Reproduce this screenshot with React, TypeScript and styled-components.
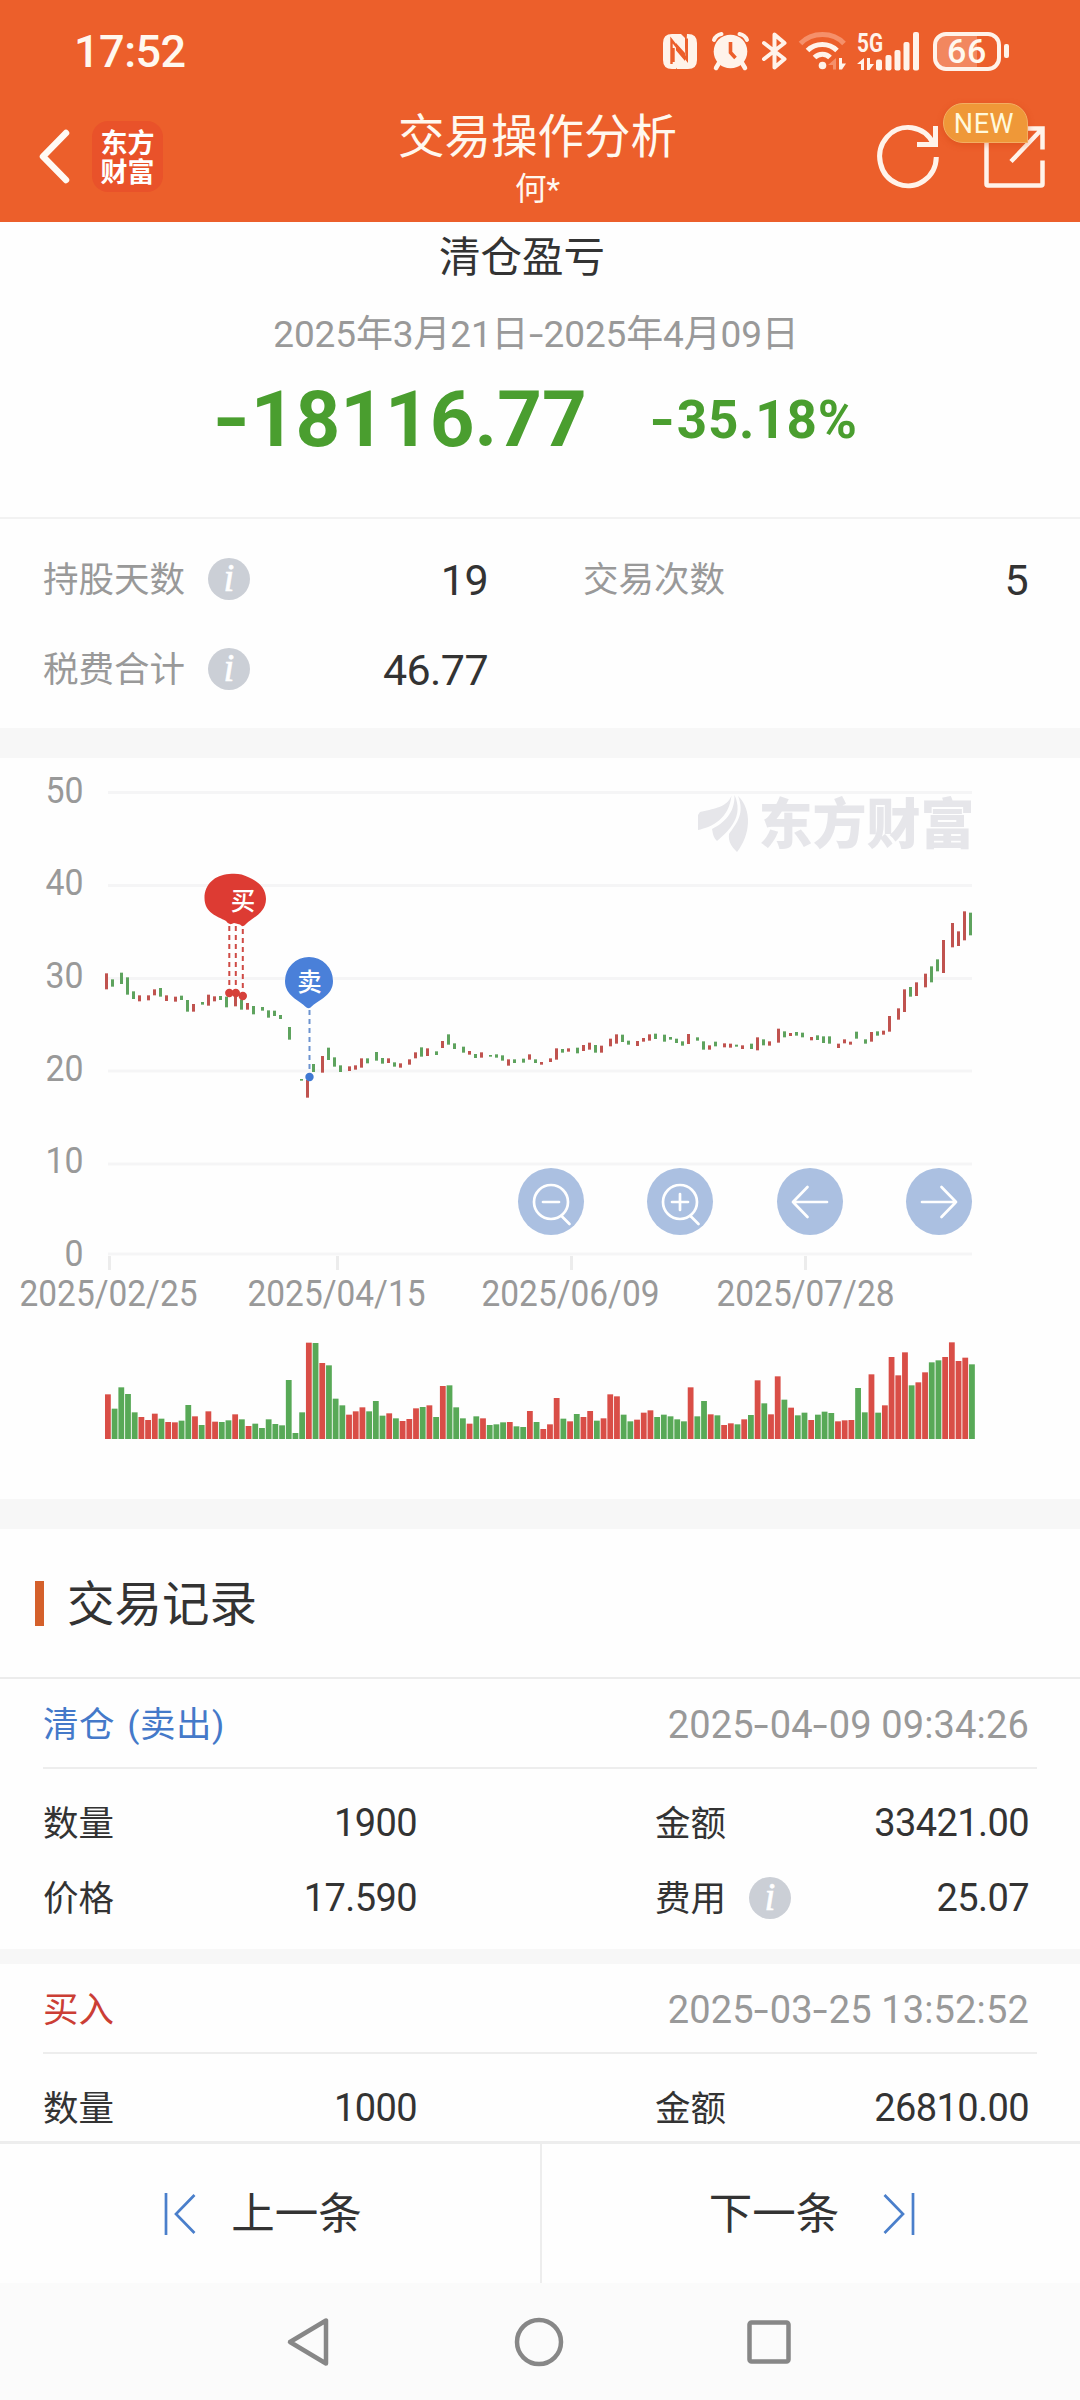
import React from "react";
import styled, { createGlobalStyle } from "styled-components";

const FONT = `Roboto, "Noto Sans CJK SC", sans-serif`;

const GlobalStyle = createGlobalStyle`
  * { box-sizing: border-box; }
  html, body { margin: 0; padding: 0; background: #fff; }
  body { font-family: ${FONT}; color: #333; }
  svg { display: block; flex: none; overflow: visible; }
`;

/* ---------- layout ---------- */

const Screen = styled.div`
  width: 1080px;
  height: 2400px;
  overflow: hidden;
  display: flex;
  flex-direction: column;
  background: #fefefe;
`;

const Header = styled.header`
  flex: none;
  height: 222px;
  background: #ec5f2b;
  color: #fff8ef;
`;

const StatusBar = styled.div`
  height: 102px;
  padding: 0 70px 0 74px;
  display: flex;
  align-items: center;
`;

const Clock = styled.span`
  flex: 1;
  font-size: 45px;
  font-weight: 500;
  line-height: 52px;
  letter-spacing: -0.5px;
  padding-top: 2px;
`;

const StatusSlot = styled.span<{ $gap: number }>`
  margin-left: ${(p) => p.$gap}px;
`;

const Battery = styled.span`
  position: relative;
  display: flex;
  align-items: center;
  justify-content: center;
  width: 68px;
  height: 39px;
  margin: 0 9px 0 14px;
  border: 4px solid #fff3ea;
  border-radius: 13px;
  background: linear-gradient(90deg, #f2875f 66%, #ec5f2b 66%);
  font-size: 34px;
  font-weight: 500;
  line-height: 31px;
  letter-spacing: 0.6px;

  &::after {
    content: "";
    position: absolute;
    right: -12px;
    top: 8px;
    width: 5px;
    height: 14px;
    border-radius: 2px;
    background: #fff3ea;
  }
`;

const NavBar = styled.div`
  height: 120px;
  padding: 0 35px 0 36px;
  display: grid;
  grid-template-columns: 1fr auto 1fr;
`;

const NavLeft = styled.div`
  display: flex;
  align-items: center;
  gap: 22px;
  height: 108px;
`;

const Logo = styled.div`
  width: 71px;
  height: 71px;
  padding: 6px 8px;
  border-radius: 16px;
  background: #e9522a;
  font-family: "Noto Sans CJK SC", sans-serif;
  font-weight: 700;
  font-size: 27px;
  line-height: 29px;
  text-align: center;
  word-break: break-all;
  color: #fff;
`;

const Titles = styled.div`
  text-align: center;
  padding: 2px 6px 0 0;
`;

const Title = styled.h1`
  margin: 0;
  font-size: 46.5px;
  font-weight: 400;
  line-height: 66px;
`;

const Subtitle = styled.div`
  font-size: 31.5px;
  line-height: 40px;
`;

const NavRight = styled.div`
  position: relative;
  justify-self: end;
  height: 108px;
  display: flex;
  align-items: center;
  gap: 45px;
`;

const NewBadge = styled.span`
  position: absolute;
  left: 66px;
  top: 1px;
  width: 85px;
  height: 40px;
  border: 1.5px solid #f3ae62;
  border-radius: 20px 20px 0 20px;
  background: #ef9838;
  box-shadow: 0 2px 6px rgba(200, 60, 10, 0.35);
  font-size: 27px;
  line-height: 40px;
  letter-spacing: 0.6px;
  text-align: center;
  color: #fff9dc;
  padding-right: 3px;
`;

const Summary = styled.section`
  flex: none;
  height: 295px;
  padding-right: 8px;
  display: flex;
  flex-direction: column;
  align-items: center;
`;

const SummaryTitle = styled.h2`
  margin: 5px 28px 0 0;
  font-size: 41.5px;
  font-weight: 400;
  line-height: 62px;
`;

const Period = styled.div`
  margin-top: 20px;
  font-size: 37px;
  line-height: 52px;
  letter-spacing: -0.15px;
  color: #999;
`;

const Result = styled.div`
  margin: 12px 2px 0 0;
  height: 92px;
  display: flex;
  align-items: center;
  gap: 63px;
  font-weight: 700;
  color: #4a9e2f;
`;

const Amount = styled.span`
  font-size: 78px;
  line-height: 92px;
  padding-top: 2px;
`;

const Percent = styled.span`
  font-size: 53px;
  line-height: 92px;
  letter-spacing: 0.8px;
  padding-top: 2px;
`;

const Dash = styled.span<{ $bold?: boolean }>`
  display: inline-block;
  transform: scaleX(${(p) => (p.$bold ? 1.25 : 1.4)});
  margin: 0 ${(p) => (p.$bold ? "0.05em" : "0.07em")};
`;

const Stats = styled.section`
  flex: none;
  height: 211px;
  border-top: 2px solid #f2f2f2;
  padding: 15px 52px 0 44px;
  display: grid;
  grid-template-columns: 444px 444px;
  column-gap: 96px;
  grid-auto-rows: 90px;
`;

const Pair = styled.div`
  display: flex;
  align-items: center;
`;

const Label = styled.span<{ $muted?: boolean }>`
  font-size: 35.5px;
  line-height: 52px;
  padding-top: 2px;
  margin-left: -1px;
  color: ${(p) => (p.$muted ? "#999" : "#333")};
`;

const Value = styled.span<{ $large?: boolean }>`
  margin-left: auto;
  font-size: ${(p) => (p.$large ? 43 : 38)}px;
  line-height: 52px;
  letter-spacing: ${(p) => (p.$large ? -0.6 : -0.6)}px;
  padding-top: 1px;
`;

const Info = styled.span`
  width: 42px;
  height: 42px;
  margin-left: 23px;
  border-radius: 50%;
  background: #cbcfd6;
  color: #fff;
  font-family: "Liberation Serif", serif;
  font-style: italic;
  font-weight: 400;
  font-size: 39px;
  line-height: 40px;
  text-align: center;
  -webkit-text-stroke: 0.6px #fff;
`;

const Band = styled.div<{ $h: number }>`
  flex: none;
  height: ${(p) => p.$h}px;
  background: #f7f7f7;
`;

const ChartPanel = styled.section`
  flex: none;
  position: relative;
  height: 741px;
`;

const ChartTools = styled.div`
  position: absolute;
  left: 518px;
  top: 410px;
  width: 454px;
  display: flex;
  justify-content: space-between;
`;

const RoundButton = styled.button`
  width: 66px;
  height: 67px;
  padding: 0;
  border: 0;
  border-radius: 50%;
  background: #abc0e1;
  display: grid;
  place-items: center;
`;

const SectionHead = styled.div`
  flex: none;
  height: 150px;
  border-bottom: 2px solid #ececec;
  padding-left: 35px;
  display: flex;
  align-items: center;
  gap: 24px;
`;

const Accent = styled.i`
  width: 9px;
  height: 45px;
  background: #d4602b;
`;

const SectionTitle = styled.h2`
  margin: 0 0 0 -1px;
  font-size: 47.5px;
  font-weight: 400;
  line-height: 60px;
  padding-top: 4px;
`;

const Record = styled.article`
  flex: none;
  padding: 0 43px;
`;

const RecordHead = styled.div`
  height: 90px;
  border-bottom: 2px solid #ededed;
  padding: 4px 8px 0 0;
  display: flex;
  align-items: center;
  justify-content: space-between;
`;

const Kind = styled.span<{ $buy?: boolean }>`
  font-size: 35.5px;
  line-height: 52px;
  word-spacing: 3px;
  letter-spacing: ${(p) => (p.$buy ? 0 : 0.5)}px;
  color: ${(p) => (p.$buy ? "#cb3e35" : "#4479c9")};
`;

const Time = styled.time`
  font-size: 38px;
  line-height: 52px;
  letter-spacing: 0.15px;
  color: #999;
`;

const RecordBody = styled.div`
  padding: 16px 8px 14px 1px;
  display: grid;
  grid-template-columns: 373px 373px;
  justify-content: space-between;
  grid-auto-rows: 75px;
`;

const Pager = styled.nav`
  flex: none;
  margin-top: auto;
  height: 142px;
  border-top: 3px solid #ededed;
  display: grid;
  grid-template-columns: 1fr 1fr;
  background: #fefefe;
`;

const PagerButton = styled.button<{ $next?: boolean }>`
  border: 0;
  border-left: ${(p) => (p.$next ? "2px solid #ededed" : "0")};
  background: none;
  padding: ${(p) => (p.$next ? "0 0 0 2px" : "0 14px 0 0")};
  display: flex;
  align-items: center;
  justify-content: center;
  gap: ${(p) => (p.$next ? 44 : 35)}px;
  font-family: ${FONT};
  font-size: 43.5px;
  line-height: 60px;
  color: #333;
`;

const PagerText = styled.span`
  padding-top: 3px;
`;

const SystemNav = styled.div`
  flex: none;
  height: 117px;
  padding: 0 289px 0 287px;
  background: #fbfbfb;
  display: flex;
  align-items: center;
  justify-content: space-between;
`;

const Scroll = styled.main`
  flex: none;
  height: 1919px;
  overflow: hidden;
  display: flex;
  flex-direction: column;
`;

/* ---------- chart data ---------- */

/* One entry per trading day: direction, body top, body bottom, volume top (device units, 3 per pixel). */
const DAYS = `R640,688,823 G658,680,866 G638,672,802 G652,704,822 G694,717,877 R706,724,891 R706,721,900 R688,706,881
G684,710,896 R706,723,906 R710,725,907 G707,720,902 G720,755,855 R732,755,889 G726,734,915 R704,737,874
R709,724,905 G708,720,906 G710,742,901 R710,739,883 G718,749,898 R729,749,918 G738,763,911 G741,752,924
G751,773,898 G752,768,912 G765,777,916 G801,839,780 G0,0,939 G957,962,877 R960,1013,668 G912,936,669
R888,938,729 G863,900,736 G892,920,836 G916,936,856 R919,933,884 R916,929,874 R895,923,862 G895,910,874
G876,902,843 G894,911,887 R895,909,880 G907,920,895 R910,923,903 R898,914,897 R877,895,865 G862,890,861
R865,888,856 G874,885,891 R843,864,798 G823,854,796 G850,867,862 G860,878,895 R873,884,911 G882,894,889
R877,893,895 G885,890,915 G883,893,913 G886,902,907 R898,917,906 G898,909,919 G896,908,921 R883,899,873
G898,909,906 R906,914,927 R895,906,913 R865,899,834 G867,878,896 R865,875,904 G863,880,882 R855,873,891
R848,869,873 G855,878,902 R857,878,895 R836,859,823 R823,851,829 G824,846,884 G842,854,904 R843,858,899
R834,845,878 R823,842,871 G821,837,891 G824,845,884 G831,839,889 G836,849,898 G844,857,904 R822,852,802
G832,842,889 G844,869,843 R856,869,883 G845,859,886 R850,862,915 R851,863,910 G854,860,913 R856,867,898
G851,867,885 R832,871,781 G838,856,850 R844,857,883 R806,848,769 G814,832,839 R819,828,863 G816,827,886
G818,832,878 R831,841,900 G826,840,884 G829,849,875 G829,851,879 R851,864,904 R838,850,901 R845,854,900
G815,836,804 G838,851,877 R816,845,763 G814,827,878 R812,824,856 R768,815,711 R745,779,766 R688,756,697
G681,710,796 R667,708,787 R641,682,757 G619,667,727 G598,634,721 R540,639,711 R489,562,667 R514,558,723
R454,541,713 G458,526,733`
  .split(/\s+/)
  .map((d, i) => {
    const [top, bottom, vol] = d.slice(1).split(",").map(Number);
    return {
      up: d[0] === "R",
      x: 105 + 3 * Math.round(2.2326 * i + 0.25),
      top: 2 + top / 3,
      h: (bottom - top) / 3,
      vx: 105 + 6.698 * i,
      vy: 362 + vol / 3,
    };
  });

const LEVELS = [
  { label: "50", y: 34.5, base: 44.5 },
  { label: "40", y: 127.5, base: 136.5 },
  { label: "30", y: 220.5, base: 229.5 },
  { label: "20", y: 313, base: 322.5 },
  { label: "10", y: 406, base: 414.5 },
  { label: "0", y: 496, base: 507.5 },
];

const DATES = [
  { label: "2025/02/25", x: 109.5, cx: 108.5 },
  { label: "2025/04/15", x: 337.5, cx: 336.5 },
  { label: "2025/06/09", x: 571.5, cx: 570.5 },
  { label: "2025/07/28", x: 805.5, cx: 805.5 },
];

function Chart() {
  return (
    <svg width="1080" height="741" viewBox="0 0 1080 741" fontFamily={FONT}>
      {LEVELS.map((l) => (
        <g key={l.label}>
          <rect x="108" y={l.y - 1.5} width="864" height="3" fill="#f5f5f6" />
          <text
            x={83.5}
            y={l.base}
            textAnchor="end"
            fontSize="36"
            fill="#999"
            textLength={l.label.length * 19}
            lengthAdjust="spacingAndGlyphs"
          >
            {l.label}
          </text>
        </g>
      ))}
      {DATES.map((d) => (
        <g key={d.label}>
          <rect x={d.x - 1.5} y="498" width="3" height="14" fill="#ececec" />
          <text
            x={d.cx}
            y="547.5"
            textAnchor="middle"
            fontSize="36"
            fill="#999"
            textLength="178"
            lengthAdjust="spacingAndGlyphs"
          >
            {d.label}
          </text>
        </g>
      ))}

      <g fill="#e6e6ea">
        <path d="M731.5 37.5 C727 50 712 51 700 54 L698 57 V72 C712 69 729 61 731.5 37.5Z" />
        <path d="M734.5 37 C735 55 724 65 712 71 C713 77 714 80 717 83 C730 72 744 58 734.5 37Z" />
        <path d="M738 38 C745 55 737 65 729 76 C728 84 732 89 737 94 C750 78 753 52 738 38Z" />
        <text x="758.5" y="86" fontFamily={`"Noto Sans CJK SC", sans-serif`} fontWeight="900" fontSize="54">
          东方财富
        </text>
      </g>

      {DAYS.map((d, i) => (
        <g key={i}>
          {d.h > 0 && <rect x={d.x} y={d.top} width="3" height={d.h} fill={d.up ? "#c0534f" : "#5ea35e"} />}
          <rect x={d.vx} y={d.vy} width="5.8" height={681 - d.vy} fill={d.up ? "#d94e47" : "#58a957"} />
        </g>
      ))}

      <g stroke="#cf4a45" strokeWidth="2" strokeDasharray="5 4">
        <path d="M229.3 168V230" />
        <path d="M235.8 168V230" />
        <path d="M242.8 171V234" />
      </g>
      <g fill="#d6403a">
        <circle cx="229.3" cy="235" r="4.2" />
        <circle cx="235.8" cy="235" r="4.2" />
        <circle cx="242.8" cy="238" r="4.2" />
      </g>
      <path
        fill="#dd3b33"
        d="M229 116 C236 115 243 116 248 119 C258 123 266 130 266 141 C266 155 252 160 246 166 Q243 170 240 166.5 L234 165 Q229 168 226 163 C217 158 204.5 155 204.5 140 C204.5 126 215 117 229 116Z"
      />
      <path d="M309.5 252V312" stroke="#6d93cf" strokeWidth="2" strokeDasharray="5 4" />
      <circle cx="309.5" cy="319" r="4.2" fill="#3f78d2" />
      <path
        fill="#4a80d9"
        d="M309 199 A24 24 0 0 1 333 223 C333 238 318 242 310.5 249.5 Q308.500 251 306.500 249.500 C299 242 285 238 285 223 A24 24 0 0 1 309 199Z"
      />
      <g fill="#fff" fontSize="24.5" fontWeight="500" textAnchor="middle" fontFamily={`"Noto Sans CJK SC", sans-serif`}>
        <text x="243" y="152">买</text>
        <text x="309.5" y="232.5">卖</text>
      </g>
    </svg>
  );
}

/* ---------- icons ---------- */

const CREAM = "#fff3ea";

function StatusIcons() {
  return (
    <>
      <svg width="34" height="35" viewBox="0 0 34 35">
        <path fill={CREAM} d="M9 0H18L22 4V19L13 9V35H9Q0 35 0 26V9Q0 0 9 0Z" />
        <path fill={CREAM} d="M24 0H25Q34 0 34 9V26Q34 35 25 35H14L11 31V14L22 27Z" />
        <path fill="none" stroke="#ec5f2b" strokeWidth="2.4" d="M8.500 30V6L23.800 25.500V4.500M10.500 14V28" />
      </svg>
      <StatusSlot $gap={15}>
        <svg width="37" height="38" viewBox="0 0 37 38">
          <circle cx="18.5" cy="19.5" r="16.800" fill={CREAM} />
          <path d="M2 8Q4 3 9.500 2M35 8Q33 3 27.500 2" stroke={CREAM} strokeWidth="4" strokeLinecap="round" fill="none" />
          <path d="M7 31L4 36M30 31L33 36" stroke={CREAM} strokeWidth="4.5" strokeLinecap="round" />
          <path d="M18.500 10V20.500L23.500 26" stroke="#ec5f2b" strokeWidth="3.6" fill="none" />
        </svg>
      </StatusSlot>
      <StatusSlot $gap={13}>
        <svg width="25" height="38" viewBox="0 0 25 38">
          <path
            d="M2 11L22.500 27L12.500 35.500V2.500L22.500 11L2 27"
            stroke={CREAM}
            strokeWidth="4"
            strokeLinecap="round"
            strokeLinejoin="round"
            fill="none"
          />
        </svg>
      </StatusSlot>
      <StatusSlot $gap={12}>
        <svg width="47" height="38" viewBox="0 0 47 38" fill="none" strokeWidth="5">
          <path d="M1.500 11.500C13 -0.500 34 -0.500 45 11.500" stroke="#f5906a" />
          <path d="M8.500 18.500C16.500 10.500 30 10.500 38 18.500" stroke={CREAM} />
          <path d="M15.500 25.500C20 21 27 21 31 25.500" stroke={CREAM} />
          <circle cx="23.5" cy="33.5" r="3.800" fill={CREAM} />
          <path d="M37 26V37.500H34V33H29Z" fill="#f5906a" />
          <path d="M40 26V37.500H43L47 31.500H43V26Z" fill={CREAM} />
        </svg>
      </StatusSlot>
      <StatusSlot $gap={11}>
        <svg width="62" height="39" viewBox="0 0 62 39" fill={CREAM}>
          <text x="0" y="19.5" fontFamily={FONT} fontWeight="700" fontSize="26" textLength="26" lengthAdjust="spacingAndGlyphs">
            5G
          </text>
          <path d="M7 26V38H4V32H0Z M10 26V38H12.500L17 32H13V26Z" />
          <rect x="19" y="27.5" width="6" height="11" rx="2" />
          <rect x="28.5" y="23" width="6" height="15.5" rx="2" />
          <rect x="37.5" y="18" width="6" height="20.5" rx="2" />
          <rect x="46.5" y="10" width="6" height="28.5" rx="2" />
          <rect x="56" y="0" width="6" height="38.5" rx="2" />
        </svg>
      </StatusSlot>
      <Battery>66</Battery>
    </>
  );
}

const BackIcon = () => (
  <svg width="34" height="56" viewBox="0 0 34 56">
    <path d="M30 5L7 28.500L30 52" fill="none" stroke="#fffaf4" strokeWidth="6.5" strokeLinecap="round" strokeLinejoin="round" />
  </svg>
);

const RefreshIcon = () => (
  <svg width="62" height="64" viewBox="0 0 62 64" fill="none" stroke={CREAM} strokeWidth="5">
    <path d="M56.300 19.500A28.300 29.200 0 1 0 59.300 33" />
    <path d="M58.500 2V20.500H40" />
  </svg>
);

const ShareIcon = () => (
  <svg width="61" height="64" viewBox="0 0 61 64" fill="none" stroke={CREAM} strokeWidth="4.5">
    <path d="M30 4.500H2.500V60Q2.500 61.500 4 61.500H57Q58.500 61.500 58.500 60V36.500" />
    <path d="M38 4.500H58.500V25.500M57.500 5.500L27 37.500" />
  </svg>
);

const ToolIcon = ({ d, lens }: { d: string; lens?: boolean }) => (
  <svg width="66" height="66" viewBox="0 0 66 66" fill="none" stroke="#fff" strokeWidth="2.7" strokeLinecap="round" strokeLinejoin="round">
    {lens && (
      <>
        <circle cx="33" cy="33" r="17" />
        <path d="M44 47.500L51.500 55" />
      </>
    )}
    <path d={d} />
  </svg>
);

const StepIcon = ({ next }: { next?: boolean }) => (
  <svg width="32" height="42" viewBox="0 0 32 42" fill="none" stroke="#4a7fcb" strokeWidth="2.7">
    <path d={next ? "M30 0V42M1.500 2L20 21L1.500 40" : "M2 0V42M30.500 2L12 21L30.500 40"} />
  </svg>
);

const Num = ({ text, bold }: { text: string; bold?: boolean }) => (
  <>
    {text.split(/(-)/).map((part, i) =>
      part === "-" ? (
        <Dash key={i} $bold={bold}>
          -
        </Dash>
      ) : (
        part
      )
    )}
  </>
);

type Field = { label: string; value: string; info?: boolean };
type Trade = { kind: string; buy?: boolean; time: string; fields: Field[] };

const TRADES: Trade[] = [
  {
    kind: "清仓 (卖出)",
    time: "2025-04-09 09:34:26",
    fields: [
      { label: "数量", value: "1900" },
      { label: "金额", value: "33421.00" },
      { label: "价格", value: "17.590" },
      { label: "费用", value: "25.07", info: true },
    ],
  },
  {
    kind: "买入",
    buy: true,
    time: "2025-03-25 13:52:52",
    fields: [
      { label: "数量", value: "1000" },
      { label: "金额", value: "26810.00" },
    ],
  },
];

const STATS: Field[] = [
  { label: "持股天数", value: "19", info: true },
  { label: "交易次数", value: "5" },
  { label: "税费合计", value: "46.77", info: true },
];

export default function App() {
  return (
    <>
      <GlobalStyle />
      <Screen>
        <Header>
          <StatusBar>
            <Clock>17:52</Clock>
            <StatusIcons />
          </StatusBar>
          <NavBar>
            <NavLeft>
              <BackIcon />
              <Logo>东方财富</Logo>
            </NavLeft>
            <Titles>
              <Title>交易操作分析</Title>
              <Subtitle>何*</Subtitle>
            </Titles>
            <NavRight>
              <RefreshIcon />
              <ShareIcon />
              <NewBadge>NEW</NewBadge>
            </NavRight>
          </NavBar>
        </Header>

        <Scroll>
          <Summary>
            <SummaryTitle>清仓盈亏</SummaryTitle>
            <Period>
              <Num text="2025年3月21日-2025年4月09日" />
            </Period>
            <Result>
              <Amount>
                <Num bold text="-18116.77" />
              </Amount>
              <Percent>
                <Num bold text="-35.18%" />
              </Percent>
            </Result>
          </Summary>
          <Stats>
            {STATS.map((s) => (
              <Pair key={s.label}>
                <Label $muted>{s.label}</Label>
                {s.info && <Info>i</Info>}
                <Value $large>{s.value}</Value>
              </Pair>
            ))}
          </Stats>
          <Band $h={30} />
          <ChartPanel>
            <Chart />
            <ChartTools>
              <RoundButton aria-label="缩小">
                <ToolIcon lens d="M25 33H41" />
              </RoundButton>
              <RoundButton aria-label="放大">
                <ToolIcon lens d="M25 33H41M33 25V41" />
              </RoundButton>
              <RoundButton aria-label="向左">
                <ToolIcon d="M50 33H16M30.500 18L16 33L30.500 48" />
              </RoundButton>
              <RoundButton aria-label="向右">
                <ToolIcon d="M16 33H50M35.500 18L50 33L35.500 48" />
              </RoundButton>
            </ChartTools>
          </ChartPanel>
          <Band $h={30} />
          <SectionHead>
            <Accent />
            <SectionTitle>交易记录</SectionTitle>
          </SectionHead>
          {TRADES.map((t, i) => (
            <React.Fragment key={t.time}>
              {i > 0 && <Band $h={15} />}
              <Record>
                <RecordHead>
                  <Kind $buy={t.buy}>{t.kind}</Kind>
                  <Time>
                    <Num text={t.time} />
                  </Time>
                </RecordHead>
                <RecordBody>
                  {t.fields.map((f) => (
                    <Pair key={f.label}>
                      <Label>{f.label}</Label>
                      {f.info && <Info>i</Info>}
                      <Value>{f.value}</Value>
                    </Pair>
                  ))}
                </RecordBody>
              </Record>
            </React.Fragment>
          ))}
        </Scroll>

        <Pager>
          <PagerButton>
            <StepIcon />
            <PagerText>上一条</PagerText>
          </PagerButton>
          <PagerButton $next>
            <PagerText>下一条</PagerText>
            <StepIcon next />
          </PagerButton>
        </Pager>
        <SystemNav>
          <svg width="42" height="50" viewBox="0 0 42 50">
            <path d="M39 3.500V46.500L3 25Z" fill="none" stroke="#878787" strokeWidth="4.5" strokeLinejoin="round" />
          </svg>
          <svg width="50" height="50" viewBox="0 0 50 50">
            <circle cx="26" cy="25" r="22" fill="none" stroke="#878787" strokeWidth="4.5" />
          </svg>
          <svg width="44" height="44" viewBox="0 0 44 44">
            <rect x="2.5" y="2.5" width="39" height="39" rx="2" fill="none" stroke="#878787" strokeWidth="4.5" />
          </svg>
        </SystemNav>
      </Screen>
    </>
  );
}
